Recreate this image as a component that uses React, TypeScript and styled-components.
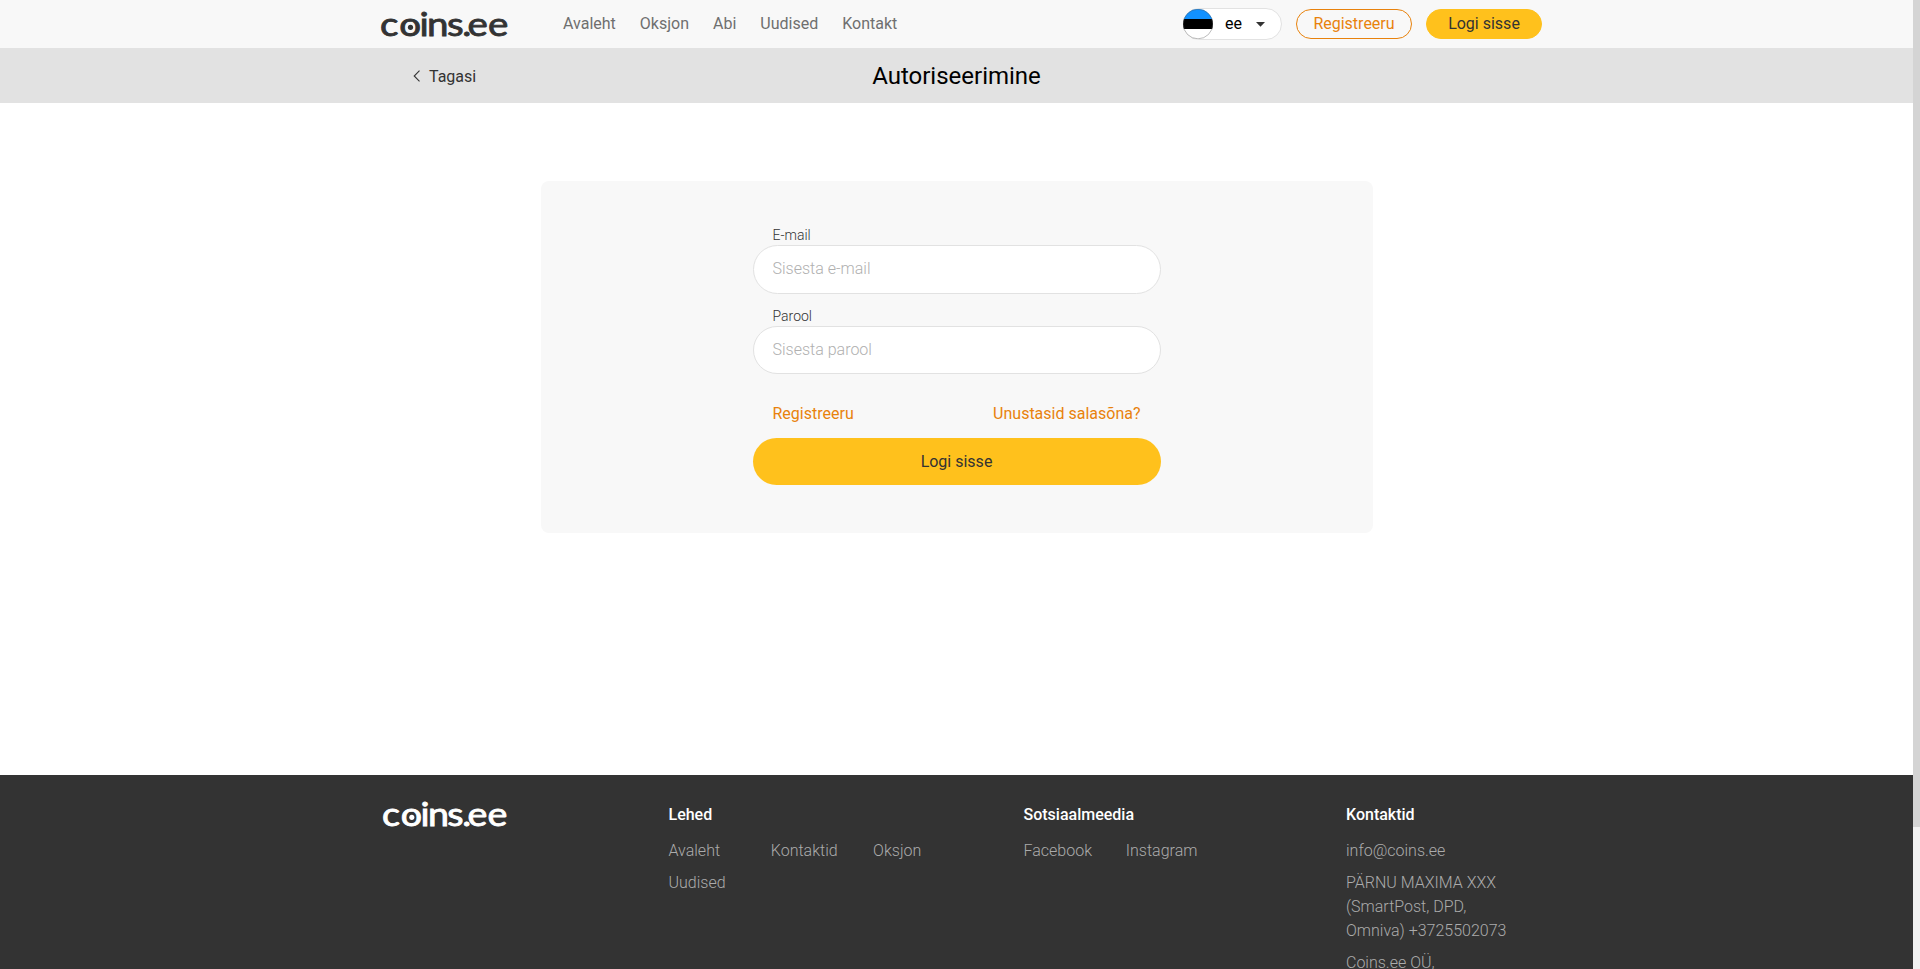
import React from "react";
import styled, { createGlobalStyle } from "styled-components";

const GlobalStyle = createGlobalStyle`
  * { box-sizing: border-box; }
  body { margin: 0; overflow: hidden; background: #fff; font-family: Roboto, sans-serif; font-size: 16px; line-height: 24px; color: #333; }
  a { color: inherit; text-decoration: none; }
`;

const Screen = styled.div`
  display: grid;
  grid-template-columns: 1913px 7px;
  height: 969px;
  overflow: hidden;
`;
const Page = styled.div`
  display: flex;
  flex-direction: column;
  height: 969px;
  overflow: hidden;
`;
const ScrollTrack = styled.div`
  background: #f1f1f1;
`;
const ScrollThumb = styled.div`
  height: 827px;
  background: #d4d4d4;
`;

const Header = styled.header`
  display: flex;
  flex: none;
  height: 48px;
  padding: 0 371px 0 381px;
  background: #f8f8f8;
`;
const Nav = styled.nav`
  display: flex;
  gap: 24px;
  padding-top: 12px;
  margin-left: 54px;
  color: #6f6f6f;
`;
const Actions = styled.div`
  display: flex;
  gap: 14px;
  margin-left: auto;
  padding-top: 9px;
`;
const Language = styled.button`
  display: flex;
  align-items: center;
  width: 99px;
  height: 32px;
  margin-top: -1px;
  padding: 0;
  border: 1px solid #e2e2e2;
  border-radius: 16px;
  background: #fff;
  color: #000;
  font: 16px/24px Roboto, sans-serif;
`;
const Flag = styled.svg`
  display: block;
  flex: none;
  width: 30px;
  height: 30px;
  margin: 0 12px 0 -1px;
`;
const Caret = styled.svg`
  width: 9px;
  height: 5px;
  margin-left: 14px;
`;
const HeaderButton = styled.button<{ $filled?: boolean }>`
  width: 116px;
  height: 30px;
  padding: 0;
  border: 1px solid ${(p) => (p.$filled ? "#ffc11c" : "#e8820c")};
  border-radius: 15px;
  background: ${(p) => (p.$filled ? "#ffc11c" : "transparent")};
  color: ${(p) => (p.$filled ? "#333" : "#e8820c")};
  font: 16px/28px Roboto, sans-serif;
`;

const TitleBar = styled.div`
  display: grid;
  grid-template-columns: 1fr auto 1fr;
  flex: none;
  height: 55px;
  background: #e2e2e2;
`;
const Back = styled.a`
  display: flex;
  align-items: flex-start;
  gap: 8px;
  padding: 17px 0 0 413px;
`;
const BackIcon = styled.svg`
  width: 8px;
  height: 12px;
  margin-top: 5px;
`;
const Title = styled.h1`
  margin: 10px 0 0;
  color: #000;
  font-size: 24px;
  font-weight: 400;
  line-height: 36px;
`;

const Main = styled.main`
  flex: none;
  height: 672px;
  padding-top: 78px;
`;
const Card = styled.section`
  width: 832px;
  height: 352px;
  margin: 0 auto;
  padding: 43px 212px 0;
  border-radius: 8px;
  background: #f8f8f8;
`;
const Field = styled.label`
  display: block;
  margin-bottom: 11px;
`;
const FieldName = styled.span`
  display: block;
  padding: 2px 0 0 20px;
  font-size: 14px;
  font-weight: 300;
  line-height: 19px;
`;
const Input = styled.input<{ $height: number }>`
  display: block;
  width: 100%;
  height: ${(p) => p.$height}px;
  padding: 0 19px 2px;
  border: 1px solid #e2e2e2;
  border-radius: 24.5px;
  background: #fff;
  font: 300 16px/24px Roboto, sans-serif;
  &::placeholder { color: #b0b0b0; opacity: 1; }
`;
const FormLinks = styled.div`
  display: flex;
  justify-content: space-between;
  padding: 17px 20px 0;
  color: #e8820c;
`;
const Submit = styled.button`
  display: block;
  width: 100%;
  height: 47px;
  margin-top: 12px;
  padding: 0;
  border: 0;
  border-radius: 23.5px;
  background: #ffc11c;
  color: #333;
  font: 16px/24px Roboto, sans-serif;
`;

const Footer = styled.footer`
  display: grid;
  grid-template-columns: 285.5px 355px 322.5px 200px;
  flex: none;
  height: 400px;
  padding: 28px 0 0 383px;
  background: #333;
`;
const FooterHeading = styled.h2`
  margin: 0 0 12px;
  color: #fff;
  font-size: 16px;
  font-weight: 500;
  line-height: 24px;
`;
const FooterLinks = styled.div`
  display: grid;
  grid-template-columns: repeat(3, 102.3px);
  row-gap: 8px;
  color: #ababab;
  font-weight: 300;
`;
const Contacts = styled.div`
  display: flex;
  flex-direction: column;
  gap: 8px;
  width: 170px;
  color: #ababab;
  font-weight: 300;
`;

const LogoSvg = styled.svg<{ $footer?: boolean }>`
  display: block;
  flex: none;
  overflow: visible;
  width: ${(p) => (p.$footer ? 125 : 128)}px;
  height: 32px;
  margin-top: ${(p) => (p.$footer ? -5 : 8)}px;
  color: ${(p) => (p.$footer ? "#fff" : "#333")};
`;

function Logo({ footer = false }: { footer?: boolean }) {
  return (
    <LogoSvg $footer={footer} viewBox="0 0 128 32" preserveAspectRatio="none">
      <text
        transform="scale(1.1 .94)"
        x="-0.9 16.6 35 41.8 59.9 73.9 78.7 97.3"
        y="29.8"
        fontFamily="Lato"
        fontWeight="400"
        fontSize="35"
        fill="currentColor"
        stroke="currentColor"
        strokeWidth="0.9"
      >
        coins.ee
      </text>
      <circle cx="29.5" cy="19.3" r="2.6" fill="currentColor" />
    </LogoSvg>
  );
}

const pages = ["Avaleht", "Oksjon", "Abi", "Uudised", "Kontakt"];

export default function App() {
  return (
    <Screen>
      <GlobalStyle />
      <Page>
        <Header>
          <Logo />
          <Nav>
            {pages.map((name) => <a key={name}>{name}</a>)}
          </Nav>
          <Actions>
            <Language>
              <Flag viewBox="0 0 30 30">
                <clipPath id="flag"><circle cx="15" cy="15" r="15" /></clipPath>
                <g clipPath="url(#flag)">
                  <rect width="30" height="30" fill="#fff" />
                  <rect width="30" height="10" fill="#1291ff" />
                  <rect y="10" width="30" height="10" fill="#000" />
                </g>
                <circle cx="15" cy="15" r="14.8" fill="none" stroke="#555" strokeWidth=".4" />
              </Flag>
              ee
              <Caret viewBox="0 0 9 5"><path d="M0 0h9L4.5 4.7z" fill="#333" /></Caret>
            </Language>
            <HeaderButton>Registreeru</HeaderButton>
            <HeaderButton $filled>Logi sisse</HeaderButton>
          </Actions>
        </Header>
        <TitleBar>
          <Back>
            <BackIcon viewBox="0 0 8 12"><path d="M6.5.7 1.2 6l5.3 5.3" fill="none" stroke="#333" strokeWidth="1.1" /></BackIcon>
            Tagasi
          </Back>
          <Title>Autoriseerimine</Title>
        </TitleBar>
        <Main>
          <Card>
            <Field>
              <FieldName>E-mail</FieldName>
              <Input $height={49} type="email" placeholder="Sisesta e-mail" />
            </Field>
            <Field>
              <FieldName>Parool</FieldName>
              <Input $height={48} type="password" placeholder="Sisesta parool" />
            </Field>
            <FormLinks>
              <a>Registreeru</a>
              <a>Unustasid salasõna?</a>
            </FormLinks>
            <Submit>Logi sisse</Submit>
          </Card>
        </Main>
        <Footer>
          <Logo footer />
          <div>
            <FooterHeading>Lehed</FooterHeading>
            <FooterLinks>
              <a>Avaleht</a>
              <a>Kontaktid</a>
              <a>Oksjon</a>
              <a>Uudised</a>
            </FooterLinks>
          </div>
          <div>
            <FooterHeading>Sotsiaalmeedia</FooterHeading>
            <FooterLinks>
              <a>Facebook</a>
              <a>Instagram</a>
            </FooterLinks>
          </div>
          <div>
            <FooterHeading>Kontaktid</FooterHeading>
            <Contacts>
              <a>info@coins.ee</a>
              <span>PÄRNU MAXIMA XXX (SmartPost, DPD, Omniva) +3725502073</span>
              <span>Coins.ee OÜ,</span>
            </Contacts>
          </div>
        </Footer>
      </Page>
      <ScrollTrack>
        <ScrollThumb />
      </ScrollTrack>
    </Screen>
  );
}
